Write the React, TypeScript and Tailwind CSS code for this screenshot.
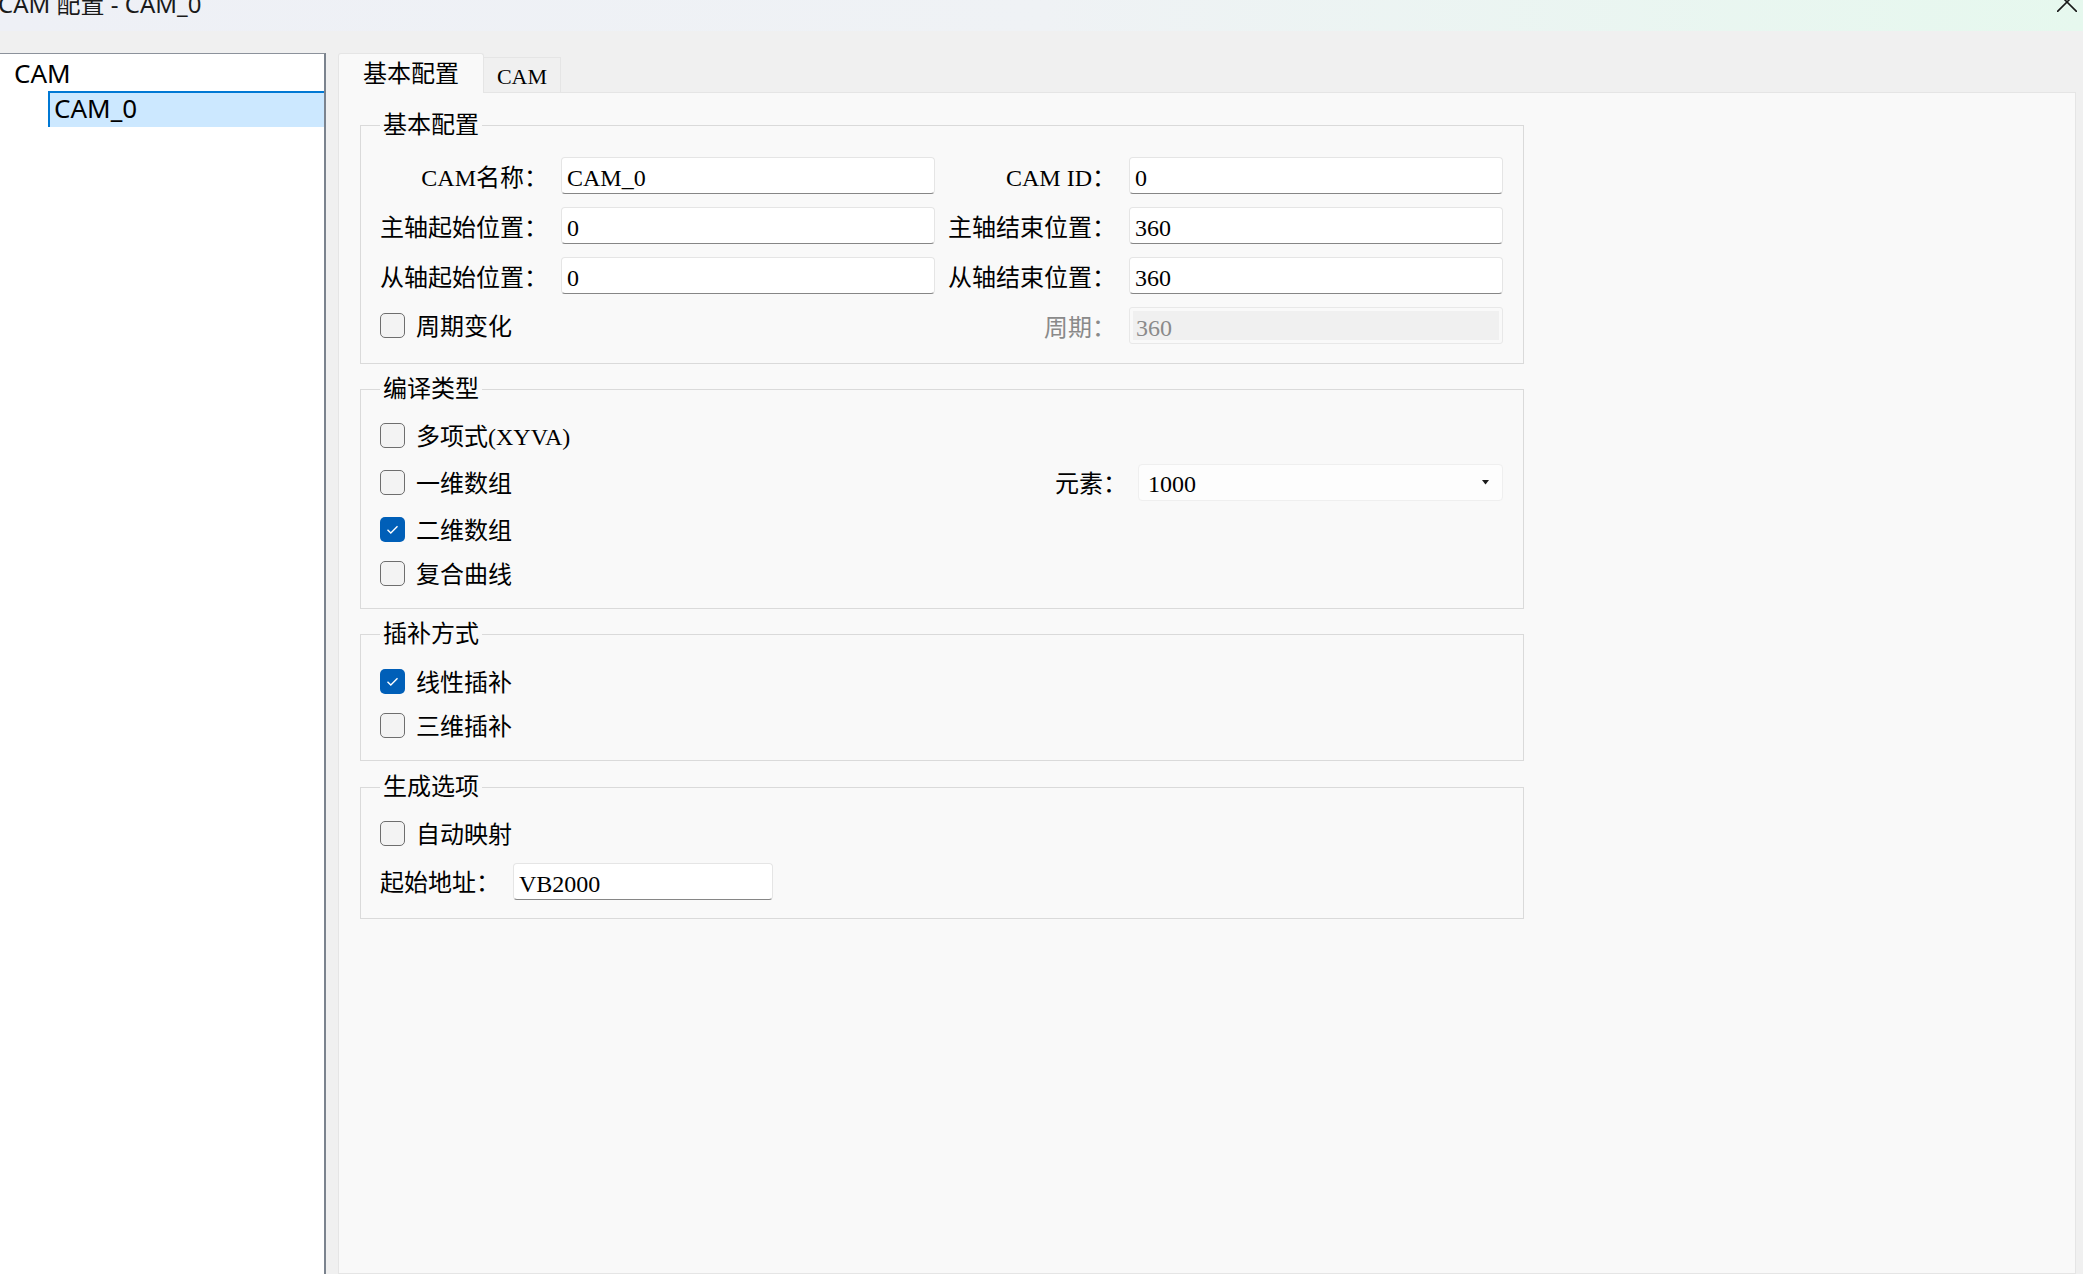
import React from "react";

const serif = "font-[family-name:'Liberation_Serif','Noto_Sans_CJK_SC',serif]";
const sans = "font-[family-name:'Noto_Sans','Noto_Sans_CJK_SC',sans-serif]";

const CheckBox = ({ checked = false, label }: { checked?: boolean; label: string }) => {
  return (
    <div className="flex items-center gap-[11px] h-[25px]">
      {checked ? (
        <div className="w-[25px] h-[25px] rounded-[5px] bg-[#005fb8] flex items-center justify-center">
          <svg width="25" height="25" viewBox="0 0 25 25">
            <path d="M7.5 12.8 L10.8 16 L17.5 9.3" fill="none" stroke="white" strokeWidth="1.4" />
          </svg>
        </div>
      ) : (
        <div className="w-[25px] h-[25px] rounded-[5px] border border-[#6e6e6e] bg-[#f3f3f3]" />
      )}
      <span className="text-[24px] leading-none pt-[2px]">{label}</span>
    </div>
  );
};

const TextBox = ({ value, className = "" }: { value: string; className?: string }) => {
  return (
    <input
      readOnly
      defaultValue={value}
      className={`h-[37px] bg-white border border-[#e5e5e5] border-b-[#868686] rounded-[4px] pl-[5px] pt-[5px] text-[24px] text-black outline-none ${className}`}
    />
  );
};

const Label = ({ children, muted = false }: { children: React.ReactNode; muted?: boolean }) => {
  return (
    <div className={`h-[37px] pt-[5px] flex items-center justify-end text-[24px] leading-none whitespace-nowrap ${muted ? "text-[#8a8a8a]" : "text-black"}`}>
      {children}
    </div>
  );
};

const GroupBox = ({
  title,
  className = "",
  children,
}: {
  title: string;
  className?: string;
  children: React.ReactNode;
}) => {
  return (
    <fieldset className={`w-[1164px] border border-[#dadada] pl-[19px] pr-[20px] ${className}`}>
      <legend className="px-[3px] text-[24px] leading-[30px]">{title}</legend>
      {children}
    </fieldset>
  );
};

const App = () => {
  return (
    <div className={`w-[2083px] h-[1274px] overflow-hidden bg-[#f0f0f0] flex flex-col text-black ${serif}`}>
      {/* title bar */}
      <div className="relative h-[31px] shrink-0 overflow-hidden bg-gradient-to-r from-[#eef0f6] via-[#eff2f5] to-[#e6f8ee]">
        <div className={`-ml-[2px] -mt-[8px] text-[24px] leading-[24px] text-[#1a1a1a] ${sans}`}>CAM 配置 - CAM_0</div>
        <svg className="absolute left-[2057px] -top-[8px]" width="20" height="20" viewBox="0 0 20 20">
          <path d="M0 0 L20 20 M20 0 L0 20" stroke="#1a1a1a" strokeWidth="1.6" />
        </svg>
      </div>

      <div className="flex flex-1 min-h-0 pt-[22px]">
        {/* tree */}
        <div className={`w-[326px] shrink-0 bg-white border-t border-t-[#8c929b] border-r-2 border-r-[#7b838e] ${sans}`}>
          <div className="h-[37px] flex items-center pl-[14px] text-[26px] leading-none">CAM</div>
          <div className="ml-[48px] h-[36px] flex items-center pl-[4px] pb-[4px] bg-[#cce8ff] border-t-2 border-l-2 border-[#0078d4] text-[26px] leading-none">
            CAM_0
          </div>
        </div>

        {/* tabs + page */}
        <div className="flex-1 flex flex-col ml-[12px] mr-[7px]">
          <div className="h-[39px] flex items-end shrink-0">
            <div className="relative z-10 -mb-px h-[40px] px-[24px] flex items-center bg-[#f9f9f9] border border-b-0 border-[#e5e5e5] rounded-t-[3px] text-[24px]">
              基本配置
            </div>
            <div className="h-[35px] w-[77px] pt-[3px] flex items-center justify-center bg-[#f0f0f0] border border-b-0 border-l-0 border-[#e5e5e5] text-[22px]">
              CAM
            </div>
          </div>
          <div className="flex-1 bg-[#f9f9f9] border border-[#e5e5e5] pl-[21px] pt-[17px] flex flex-col gap-[10px]">
            <GroupBox title="基本配置">
              <div className="pt-[17px] pb-[19px] grid grid-cols-[168px_374px_168px_374px] gap-x-[13px] gap-y-[13px] items-center">
                <Label>CAM名称：</Label>
                <TextBox value="CAM_0" />
                <Label>CAM ID：</Label>
                <TextBox value="0" />

                <Label>主轴起始位置：</Label>
                <TextBox value="0" />
                <Label>主轴结束位置：</Label>
                <TextBox value="360" />

                <Label>从轴起始位置：</Label>
                <TextBox value="0" />
                <Label>从轴结束位置：</Label>
                <TextBox value="360" />

                <div className="col-span-2 h-[37px] flex items-center">
                  <CheckBox label="周期变化" />
                </div>
                <Label muted>周期：</Label>
                <div className="h-[37px] border border-[#e8e8e8] rounded-[3px] p-[3px]">
                  <div className="h-full bg-[#f0f0f0] flex items-center px-[3px] pt-[4px] text-[24px] leading-none text-[#8a8a8a]">360</div>
                </div>
              </div>
            </GroupBox>

            <GroupBox title="编译类型">
              <div className="pt-[19px] pb-[22px] flex flex-col gap-[19px]">
                <CheckBox label="多项式(XYVA)" />
                <div className="h-[31px] flex items-center">
                  <CheckBox label="一维数组" />
                  <div className="ml-auto flex items-center gap-[11px]">
                    <span className="text-[24px] leading-none pt-[2px]">元素：</span>
                    <div className="w-[365px] h-[37px] bg-[#fdfdfd] border border-[#efefef] rounded-[4px] flex items-center pl-[9px] pr-[13px] text-[24px] leading-none">
                      <span className="flex-1 pt-[3px]">1000</span>
                      <svg width="7" height="5" viewBox="0 0 7 5">
                        <polygon points="0,0 7,0 3.5,4.5" fill="#1a1a1a" />
                      </svg>
                    </div>
                  </div>
                </div>
                <CheckBox checked label="二维数组" />
                <CheckBox label="复合曲线" />
              </div>
            </GroupBox>

            <GroupBox title="插补方式">
              <div className="pt-[20px] pb-[22px] flex flex-col gap-[19px]">
                <CheckBox checked label="线性插补" />
                <CheckBox label="三维插补" />
              </div>
            </GroupBox>

            <GroupBox title="生成选项" className="mt-[1px]">
              <div className="pt-[19px] pb-[18px] flex flex-col gap-[17px]">
                <CheckBox label="自动映射" />
                <div className="flex items-center gap-[13px]">
                  <span className="text-[24px] leading-none pt-[3px]">起始地址：</span>
                  <TextBox value="VB2000" className="w-[260px]" />
                </div>
              </div>
            </GroupBox>
          </div>
        </div>
      </div>
    </div>
  );
};

export default App;
